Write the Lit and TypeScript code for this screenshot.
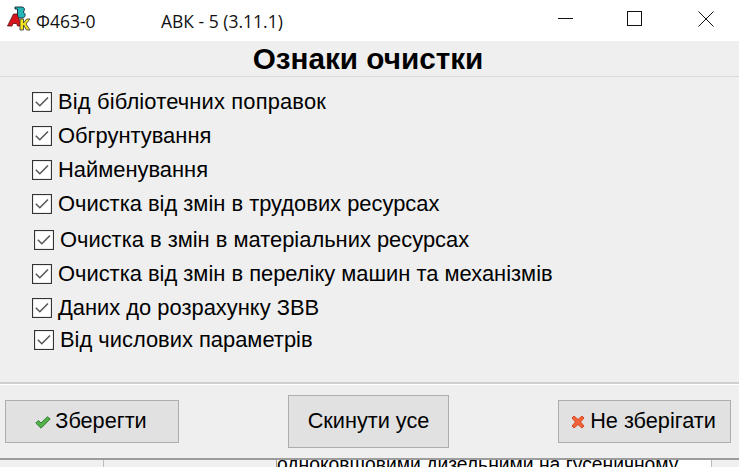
import { LitElement, html, css, svg } from "lit";
import { customElement } from "lit/decorators.js";

const ROWS: [string, string][] = [
  ["Від бібліотечних поправок", "r1"],
  ["Обгрунтування", "r"],
  ["Найменування", "r"],
  ["Очистка від змін в трудових ресурсах", "r"],
  ["Очистка в змін в матеріальних ресурсах", "r5"],
  ["Очистка від змін в переліку машин та механізмів", "r6"],
  ["Даних до розрахунку ЗВВ", "r7"],
  ["Від числових параметрів", "r8"],
];

const tick = svg`<svg class="box" width="20" height="20" viewBox="0 0 20 20"><rect x=".5" y=".5" width="19" height="19" fill="#fff" stroke="#333" stroke-width="1.2"/><path d="M3.800 9.800l4 4L16 5.500" fill="none" stroke="#555" stroke-width="1.500"/></svg>`;

@customElement("app-root")
export class AppRoot extends LitElement {
  static styles = css`
    :host { display: block; width: 739px; height: 467px; overflow: hidden; background: #efefef; font-family: "Liberation Sans", Arial, sans-serif; color: #000; }
    .titlebar { height: 41px; background: #fff; display: flex; align-items: center; font: 17.5px "Open Sans", sans-serif; color: #111; }
    .logo { margin-left: 7px; width: 24px; height: 25px; flex: none; margin-top: -5px; }
    .form-no { margin-left: 5px; width: 125px; }
    .win { margin-left: auto; display: flex; align-self: flex-start; padding-top: 11px; }
    .win svg { display: block; }
    .min { width: 69px; }
    .max { width: 71px; }
    .close { width: 41px; }
    .main { height: 343px; display: flex; flex-direction: column; box-sizing: border-box; border-bottom: 2px solid #cfcfcf; }
    h1 { margin: 0; height: 35px; line-height: 36px; font-size: 29.7px; font-weight: bold; text-align: center; border-bottom: 1px solid #d9d9d9; box-sizing: content-box; padding-right: 3px; }
    .rows { display: flex; flex-direction: column; }
    .row { display: flex; align-items: center; gap: 6px; height: 34px; font-size: 21.9px; margin-left: 32px; }
    .r1 { margin-top: 8px; }
    .r1 span { letter-spacing: 0.16px; }
    .r5 { margin-left: 34px; margin-top: 2px; }
    .r7 { height: 33px; }
    .r8 { margin-left: 34px; height: 31px; }
    .box { flex: none; display: block; }
    .footer { height: 73px; border-top: 1px solid #fff; border-bottom: 2px solid #9c9c9c; box-sizing: content-box; display: flex; align-items: center; justify-content: space-between; padding: 0 8px 0 5px; }
    button { font: 21.7px "Liberation Sans", Arial, sans-serif; color: #000; background: #e1e1e1; border: 1px solid #adadad; padding: 0 0 2px; display: flex; align-items: center; justify-content: center; margin: 0; }
    .save { width: 174px; height: 43px; gap: 4px; padding-right: 2px; }
    .save svg, .cancel svg { margin-top: 3px; }
    .reset { width: 161px; height: 53px; }
    .cancel { width: 173px; height: 43px; gap: 5px; padding-right: 2px; }
    .under { height: 7px; background: #f0f0f0; display: flex; overflow: hidden; }
    .c1 { width: 103px; flex: none; }
    .c2 { width: 174px; flex: none; border-left: 1px solid #bdbdbd; border-right: 1px solid #a0a0a0; box-sizing: border-box; }
    .c3 { width: 435px; flex: none; border-right: 1px solid #bdbdbd; box-sizing: border-box; background: #fff; font-size: 19.3px; line-height: 22px; white-space: nowrap; overflow: hidden; }
    .c3 span { display: block; margin-top: -6px; }
  `;

  render() {
    return html`
      <div class="titlebar">
        <svg class="logo" viewBox="0 0 24 25">
          <path d="M8 1h7c3 0 3 4 1 5 3 1 3 6-1 6H9v-2h1.500V3H8z" fill="#25b7b7" stroke="#123" stroke-width=".9"/>
          <path d="M.5 20l6-12h3.500l4.500 12h-4l-.8-2.500H6L5 20z" fill="#d8161c" stroke="#511" stroke-width=".8"/>
          <path d="M13 13h3.500v4l3-4h3.500l-4 5 4 6h-3.500l-3-5v5H13z" fill="#f3e21e" stroke="#333" stroke-width=".8"/>
        </svg>
        <span class="form-no">Ф463-0</span>
        <span>АВК - 5 (3.11.1)</span>
        <div class="win">
          <div class="min"><svg width="15" height="15"><path d="M0 7.500h15" stroke="#111"/></svg></div>
          <div class="max"><svg width="15" height="15"><rect x=".5" y=".5" width="14" height="14" fill="none" stroke="#111"/></svg></div>
          <div class="close"><svg width="16" height="16"><path d="M.5.5l15 15M15.500.5l-15 15" stroke="#111"/></svg></div>
        </div>
      </div>
      <div class="main">
        <h1>Ознаки очистки</h1>
        <div class="rows">
          ${ROWS.map(([t, c]) => html`<div class="row ${c}">${tick}<span>${t}</span></div>`)}
        </div>
      </div>
      <div class="footer">
        <button class="save">
          <svg width="16" height="13" viewBox="0 0 16 13"><path d="M.8 7l2.500-2.500L6 7l6.500-6.200L15.200 3 6 12.200z" fill="#55b04a" stroke="#2f7d32" stroke-linejoin="round"/></svg>
          <span>Зберегти</span>
        </button>
        <button class="reset">Скинути усе</button>
        <button class="cancel">
          <svg width="14" height="14" viewBox="0 0 14 14"><path d="M3 1l4 3.500L11 1l2 2-3.500 4 3.500 4-2 2-4-3.500L3 13l-2-2 3.500-4L1 3z" fill="#f0643a" stroke="#d8431c" stroke-linejoin="round"/></svg>
          <span>Не зберігати</span>
        </button>
      </div>
      <div class="under">
        <div class="c1"></div>
        <div class="c2"></div>
        <div class="c3"><span>одноковшовими дизельними на гусеничному</span></div>
      </div>
    `;
  }
}
